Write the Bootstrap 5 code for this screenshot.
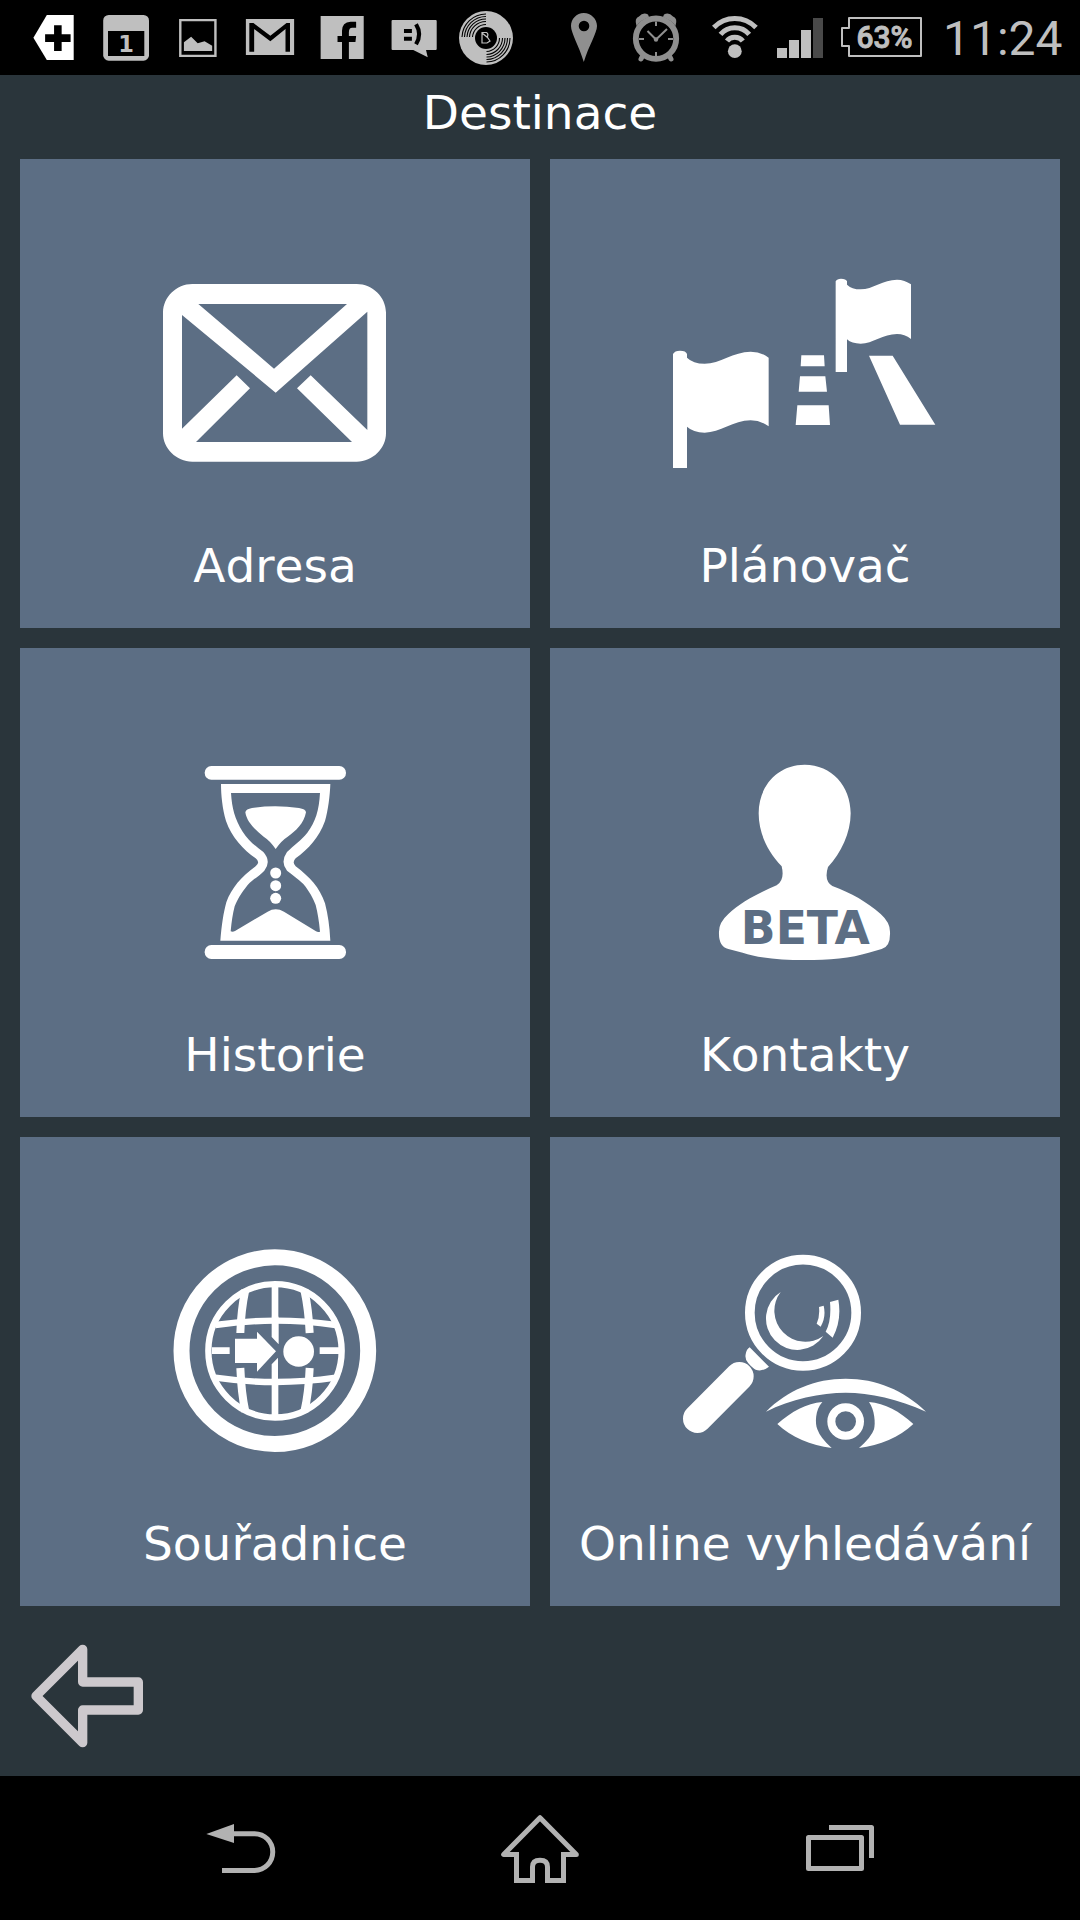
<!DOCTYPE html>
<html lang="cs">
<head>
<meta charset="utf-8">
<meta name="viewport" content="width=device-width, initial-scale=1">
<title>Destinace</title>
<link href="https://cdn.jsdelivr.net/npm/bootstrap@5.3.0/dist/css/bootstrap.min.css" rel="stylesheet">
<style>
  body { background: #2a353b; font-family: "DejaVu Sans", sans-serif; color: #fff; }
  .screen { width: 1080px; height: 1920px; }
  .status-bar { height: 75px; padding-left: 18px; background: #000; color: #bfbfbf; }
  .status-bar svg, .tile svg, .nav-bar svg, .back-btn svg { display: block; flex: none; }
  .clock-time { font: 400 48px/62px Roboto, sans-serif; margin-left: 18px; padding-top: 8px; white-space: nowrap; }
  .screen-title { height: 84px; font-size: 47px; line-height: 76px; font-weight: 400; }
  .tile-grid { display: grid; grid-template-columns: 510px 510px; grid-auto-rows: 469px; gap: 20px; padding: 0 20px; }
  .tile { background: #5c6e84; color: #fff; }
  .tile-label { font-size: 47px; line-height: 62px; white-space: nowrap; font-kerning: none; }
  .back-row { height: 170px; }
  .nav-bar { height: 144px; background: #000; color: #b2b2b2; }
</style>
</head>
<body>
<main class="screen d-flex flex-column overflow-hidden">
  <header class="status-bar d-flex">
    <svg width="72" height="75" viewBox="52.3 0 209 225" preserveAspectRatio="none"><path fill="#fff" d="M97 113L136 45H214V180H136Z"/><path d="M157 76h22v27h26v23h-26v27h-22v-27h-26v-23h26z"/></svg>
    <svg width="72" height="75" viewBox="90 0 72 75"><rect x="103.2" y="15" width="45.8" height="45.7" rx="5.5" fill="#bfbfbf"/><rect x="108" y="31" width="36.3" height="25"/><text x="126" y="52.3" text-anchor="middle" font-family="DejaVu Sans" font-weight="700" font-size="22.5" fill="#bfbfbf">1</text></svg>
    <svg width="72" height="75" viewBox="470.4 0 209 225" preserveAspectRatio="none"><path fill="none" stroke="#bfbfbf" stroke-width="7" d="M523.5 60.500H625.500V167.500H523.500Z"/><path fill="#bfbfbf" d="M534 153V127L555 110L574 130L594 124L616 137V153Z"/></svg>
    <svg width="72" height="75" viewBox="679.5 0 209 225" preserveAspectRatio="none"><path fill="#bfbfbf" d="M714 57H854V165H714Z"/><path d="M724 155V69H736L785 107L832 69H842V155H829V87L785 124L738 87V155Z"/></svg>
    <svg width="72" height="75" viewBox="888.5 0 209 225" preserveAspectRatio="none"><path fill="#bfbfbf" d="M931 48H1056V177H1013V126H1032L1034 108H1013V96Q1013 83 1023 83H1034V65H1018Q993 67 993 92V108H980V126H993V177H931Z"/></svg>
    <svg width="72" height="75" viewBox="1097.6 0 209 225" preserveAspectRatio="none"><path fill="#bfbfbf" d="M1140 60H1265Q1268 60 1268 63V147Q1268 150 1265 150H1237L1242 172L1200 150H1140Q1137 150 1137 147V63Q1137 60 1140 60Z"/><path d="M1173 87h23v12h-23zM1173 110h23v12h-23z"/><path fill="none" stroke="#000" stroke-width="12" d="M1208 73Q1226 103 1208 133"/></svg>
    <svg width="72" height="75" viewBox="450 0 72 75"><circle cx="486" cy="38" r="27" fill="#bfbfbf"/><circle cx="486" cy="38" r="11"/><g fill="none" stroke="#000" stroke-width="1.100"><path d="M472.500 37A13.500 13.500 0 0 1 486 24.500M469.500 37A16.500 16.500 0 0 1 486 21.500M467 37A19 19 0 0 1 486 19M464.500 37A21.500 21.500 0 0 1 486 16.500M462 37A24 24 0 0 1 486 14"/><path d="M499.500 38A13.500 13.500 0 0 1 486.500 51.500M502.500 38A16.500 16.500 0 0 1 486.500 54.500M505 38A19 19 0 0 1 486.500 57M507.500 38A21.500 21.500 0 0 1 486.500 59.500M510 38A24 24 0 0 1 486.500 62"/></g><path fill="none" stroke="#bfbfbf" stroke-width="1.200" d="M482 33L487.500 37.500L490 41L487 43H482V32.500H486.500Q489 34 487 37.500"/></svg>
    <svg width="72" height="75" viewBox="548 0 72 75" style="margin-left:26px"><path fill="#8f8f8f" fill-rule="evenodd" d="M583.800 13C576.500 13 571 19 571 26C571 33 579 46 583.800 62C588.600 46 597 33 597 26C597 19 591.100 13 583.800 13ZM584 20.700a5.300 5.300 0 1 1 0 10.600a5.300 5.300 0 1 1 0-10.600Z"/></svg>
    <svg width="72" height="75" viewBox="620 0 72 75"><g fill="none" stroke="#8f8f8f"><circle cx="656" cy="38.700" r="20.200" stroke-width="5.800"/><path stroke-width="2" d="M656 21.500V26M656 52V57M639 39h5M668 39h5M647.500 31L656 39.500L667 29"/><path stroke-width="5" stroke-linecap="round" d="M643 55l-2 4M669 55l2 4"/></g><path fill="#8f8f8f" d="M636.500 26Q634 18 639 16.500Q643 12 648 14.500L649 17Q641 20 636.500 26ZM675.500 26Q678 18 673 16.500Q669 12 664 14.500L663 17Q671 20 675.500 26Z"/><circle cx="656" cy="39.500" r="2.200" fill="#8f8f8f"/></svg>
    <svg width="72" height="75" viewBox="699 0 72 75" style="margin-left:7px"><circle cx="734.800" cy="51.200" r="6.900" fill="#bfbfbf"/><g fill="none" stroke="#bfbfbf" stroke-width="5"><path d="M713.800 27.500Q722.500 18.500 734.800 18.500T756 27.500"/><path d="M720.500 34.300Q726 27.700 734.800 27.700T749.200 34.300"/><path d="M727 41Q729.500 37.300 734.800 37.300T742.800 41"/></g></svg>
    <svg width="60" height="75" viewBox="771 0 60 75"><path fill="#bfbfbf" d="M777 48h10v10h-10zM789 40h10v18h-10zM801 30h10v28h-10z"/><path fill="#494949" d="M813 18h10v40h-10z"/></svg>
    <svg width="94" height="75" viewBox="831 0 94 75"><path fill="none" stroke="#bfbfbf" stroke-width="2" stroke-linejoin="round" d="M849 18H921V56H849V46H842V28H849Z"/><text x="884.500" y="48" text-anchor="middle" font-family="Roboto" font-weight="500" font-size="31" textLength="56" lengthAdjust="spacingAndGlyphs" fill="#bfbfbf" stroke="#bfbfbf" stroke-width=".9">63%</text></svg>
    <span class="clock-time">11:24</span>
  </header>

  <h1 class="screen-title text-center m-0">Destinace</h1>

  <section class="tile-grid">
    <a class="tile d-flex flex-column align-items-center text-decoration-none" href="#">
      <svg width="510" height="376" viewBox="-360 -303 1530 1128" fill="#fff"><path fill-rule="evenodd" d="M157 72H650C698 72 738 112 738 157V520C738 565 698 605 650 605H157C109 605 69 565 69 520V157C69 112 109 72 157 72ZM175 132L402 326L621 132ZM126 165V506L290 346L330 385L168 546H636L471 385L512 346L682 510V155L407 398Z"/></svg>
      <span class="tile-label">Adresa</span>
    </a>
    <a class="tile d-flex flex-column align-items-center text-decoration-none" href="#">
      <svg width="510" height="376" viewBox="-300 -303 1530 1128" fill="#fff"><path d="M69 624V282Q74 272 90 272Q108 272 111 282V293Q129 311 164 311C210 311 250 275 302 275Q332 275 356 293V499Q332 481 302 481C250 481 210 518 164 518Q129 517 111 500V624Z"/><path d="M557 336V64Q561 56 573 56Q588 56 591 64V74Q605 88 632 88C668 88 700 59 741 59Q764 59 783 73V237Q764 222 741 222C700 222 668 251 632 251Q605 251 591 238V336Z"/><path d="M454 286H522L524 319H452ZM450 349H526L531 395H446ZM442 436H536L540 495H437ZM657 287H728L856 494H750Z"/></svg>
      <span class="tile-label">Plánovač</span>
    </a>
    <a class="tile d-flex flex-column align-items-center text-decoration-none" href="#">
      <svg width="510" height="376" viewBox="-450 -276 1530 1128" fill="#fff"><rect x="104" y="78" width="424" height="41" rx="20"/><rect x="104" y="615" width="424" height="42" rx="20"/><path fill-rule="evenodd" d="M153 132H481C480 165 474 213 465 243C447 293 416 326 377 355Q365 367 377 379C420 412 448 441 465 490Q478 540 481 602H151C155 555 160 520 169 487C184 445 214 410 257 379Q272 367 257 355C220 329 185 292 168 243C157 205 153 165 153 132ZM183 159C186 205 194 236 218 275C235 302 255 317 280 336Q305 364 283 392C266 410 250 417 233 435C212 462 203 477 194 499Q186 530 182 574Q188 577 195 573L293 515Q317 501 342 515L438 574Q444 578 450 575Q446 530 437 495C430 477 419 455 400 432C383 415 367 405 351 392Q330 366 351 336C371 316 394 301 412 278C437 244 447 212 450 159Z"/><path d="M226 217Q228 207 246 204Q315 194 387 204Q407 207 408 217C402 250 377 274 353 290Q334 302 317 327Q300 302 281 290C257 271 230 246 226 217Z"/><circle cx="317" cy="399" r="16.500"/><circle cx="317" cy="437" r="16.500"/><circle cx="317" cy="475" r="16.500"/></svg>
      <span class="tile-label">Historie</span>
    </a>
    <a class="tile d-flex flex-column align-items-center text-decoration-none" href="#">
      <svg width="510" height="376" viewBox="-420 -276 1530 1128" fill="#fff"><path d="M344 74C425 74 482 138 482 220C482 280 453 339 414 381Q401 422 427 438C485 460 530 485 572 522Q600 547 600 575Q602 620 575 627L536 638C485 654 415 660 344 660C270 660 206 654 158 638L115 627Q85 620 87 575Q87 547 115 522C155 485 205 459 260 436Q285 420 275 379C233 335 206 280 206 220C206 138 263 74 344 74Z"/><text x="346" y="612" text-anchor="middle" font-family="DejaVu Sans" font-weight="700" font-size="141" textLength="387" lengthAdjust="spacingAndGlyphs" fill="#5c6e84">BETA</text></svg>
      <span class="tile-label">Kontakty</span>
    </a>
    <a class="tile d-flex flex-column align-items-center text-decoration-none" href="#">
      <svg width="510" height="376" viewBox="-330 -279 1530 1128" fill="#fff"><g fill="none" stroke="#fff"><circle cx="434.500" cy="362" r="280" stroke-width="48"/><circle cx="435" cy="362.500" r="200" stroke-width="19"/><path stroke-width="20" d="M246 362H299M569 362H628M435 170V262M435 460V555"/><path stroke-width="19" d="M256 285Q435 259 617 285M256 443Q435 469 617 443"/><path stroke-width="24" d="M346 180Q333 240 331 309M523 180Q536 240 539 309M331 414Q334 490 346 545M539 414Q536 490 523 545"/></g><path d="M425 260H446V343L425 321ZM425 460V403L444 383V460ZM315 326H381V305L438 364L381 425V399H315Z"/><circle cx="506" cy="364.500" r="46"/></svg>
      <span class="tile-label">Souřadnice</span>
    </a>
    <a class="tile d-flex flex-column align-items-center text-decoration-none" href="#">
      <svg width="510" height="376" viewBox="-60 -279 1530 1128" fill="#fff"><circle cx="699" cy="248.500" r="159.500" fill="none" stroke="#fff" stroke-width="29"/><path d="M632 186A94 94 0 1 0 760 318A93 93 0 0 1 632 186ZM747 231L761 227Q769 261 752 290L740 281Q750 260 747 231ZM780 216L805 209Q816 270 788 323L767 305Q785 272 780 216ZM539 352L597 410Q577 426 557 419Q548 415 535 400Q524 388 527 373Q529 358 539 352Z"/><path stroke="#fff" stroke-width="86" stroke-linecap="round" d="M508 439L382 566"/><path d="M588 545C653 480 735 446 827 446S1001 480 1068 545C985 507 900 488 827 488S661 507 588 545ZM622 582C665 544 710 520 757 516C735 540 735 580 742 598Q751 624 785 654C723 646 664 622 622 582ZM1030 582C989 544 945 520 897 516C914 540 917 580 912 598Q904 622 867 654C930 646 988 622 1030 582Z"/><circle cx="827" cy="574.500" r="43" fill="none" stroke="#fff" stroke-width="24"/></svg>
      <span class="tile-label">Online vyhledávání</span>
    </a>
  </section>

  <div class="back-row d-flex">
    <a class="back-btn" href="#" aria-label="Zpět"><svg width="170" height="170" viewBox="0 48 510 510"><path fill="none" stroke="#cdc9cd" stroke-width="28" stroke-linejoin="round" d="M108 318L248 178V276H415V360H248V458Z"/></svg></a>
  </div>

  <nav class="nav-bar d-flex justify-content-between">
    <svg width="360" height="144" viewBox="0 558 1080 432"><path fill="#b2b2b2" d="M619 732L702 702V759Z"/><path fill="none" stroke="#b2b2b2" stroke-width="15" d="M700 731H764A54 55 0 0 1 764 841.500H666"/></svg>
    <svg width="360" height="144" viewBox="-300 18 1080 432"><path fill="none" stroke="#b2b2b2" stroke-width="15" stroke-linejoin="round" d="M240 143L131 253.500H169.500V331.500H217.500V291Q217.500 271 240 271T262.500 291V331.500H310.500V253.500H349Z"/><path fill="#b2b2b2" d="M162 324h63v15h-63zM255 324h63v15h-63zM162 246h15v20h-15zM303 246h15v20h-15z"/></svg>
    <svg width="360" height="144" viewBox="780 18 1080 432"><g fill="none" stroke="#b2b2b2" stroke-width="15" stroke-linejoin="round"><path d="M1045.500 202.500H1204.500V295.500H1045.500Z"/><path d="M1107 172.500H1234.500V264"/></g></svg>
  </nav>
</main>
<script src="https://cdn.jsdelivr.net/npm/bootstrap@5.3.0/dist/js/bootstrap.bundle.min.js"></script>
</body>
</html>
